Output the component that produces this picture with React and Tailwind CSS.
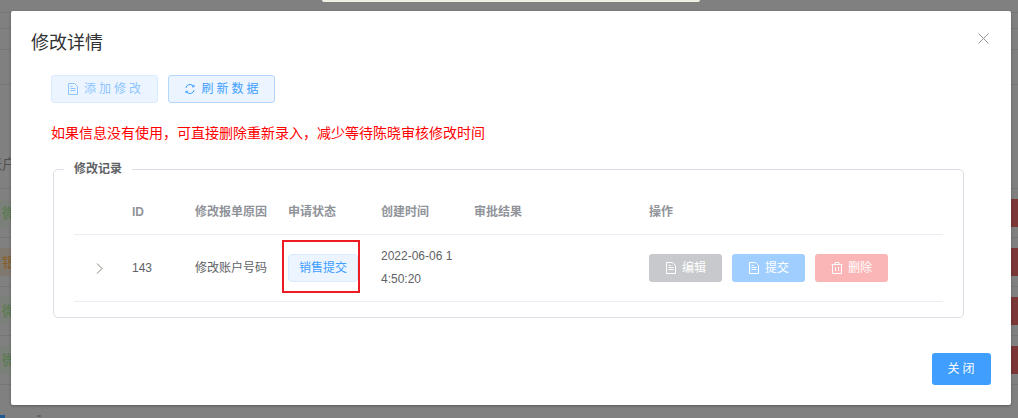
const FONT = "font-['Liberation_Sans','Noto_Sans_CJK_SC',sans-serif]";

function DocIcon({ className }) {
  return (
    <svg viewBox="0 0 12 12" width="12" height="12" fill="none" stroke="currentColor" strokeWidth="1" className={className}>
      <path d="M1.500 0.500h6l3 3v8h-9z" />
      <path d="M3.500 5.500h5M3.500 7.500h5M3.500 3.500h2" />
    </svg>
  );
}

function TrashIcon({ className }) {
  return (
    <svg viewBox="0 0 12 12" width="12" height="12" fill="none" stroke="currentColor" strokeWidth="1" className={className}>
      <path d="M0.500 2.500h11M4 2.500v-2h4v2M1.500 2.500v9h9v-9" />
      <path d="M4.500 5v4M7.500 5v4" />
    </svg>
  );
}

function RefreshIcon({ className }) {
  return (
    <svg viewBox="0 0 12 12" width="12" height="12" fill="none" stroke="currentColor" strokeWidth="1" className={className}>
      <path d="M1.800 5a4.300 4.300 0 0 1 7.200-2.300l1 1M10.200 7a4.300 4.300 0 0 1-7.200 2.300l-1-1" />
      <path d="M10 1.800v2h-2M2 10.200v-2h2" />
    </svg>
  );
}

function Cap() {
  return <div className="h-[10px]" />;
}

function BgRow({ tint, textColor, label, red }) {
  return (
    <div className="flex flex-col">
      <Cap />
      <div className={`flex h-[28px] items-center justify-between ${tint}`}>
        <span className={`ml-[2px] text-[14px] leading-[28px] ${textColor}`}>{label}</span>
        {red && <div className="h-[28px] w-[40px] bg-[#7b3636]" />}
      </div>
      <div className="h-[11px] border-b border-[#767676]" />
    </div>
  );
}

function ActionButton({ color, icon, label }) {
  return (
    <button className={`flex h-[28px] w-[73px] items-center justify-center gap-[5px] rounded-[3px] text-[12px] text-white ${color}`}>
      {icon}
      <span>{label}</span>
    </button>
  );
}

export default function App() {
  return (
    <div className={`relative h-[418px] w-[1018px] overflow-hidden bg-[#808080] ${FONT}`}>
      {/* page behind the overlay */}
      <div className="flex flex-col">
        <div className="ml-[322px] h-[2px] w-[378px] rounded-b-[2px] bg-[#eef0e2]" />
        <div className="h-[11px] border-b border-[#767676]" />
        <div className="h-[16px] border-b border-[#767676]" />
        <div className="h-[21px] border-b border-[#767676]" />
        <div className="h-[35px] border-b border-[#767676]" />
        <div className="flex h-[104px] items-end border-b border-[#767676] pb-[14px]">
          <span className="-ml-[12px] text-[14px] leading-[20px] text-[#505050]">账户</span>
        </div>
        <BgRow tint="bg-[#7b807a]" textColor="text-[#557a48]" label="微" red />
        <BgRow tint="bg-[#80796f]" textColor="text-[#8a5f28]" label="银" red />
        <BgRow tint="bg-[#7b807a]" textColor="text-[#557a48]" label="微" red />
        <BgRow tint="bg-[#7b807a]" textColor="text-[#557a48]" label="微" red />
        <div className="mt-[30px] flex h-[3px] items-start gap-[32px]">
          <div className="h-[3px] w-[5px] bg-[#205a90]" />
          <div className="h-[2px] w-[4px] bg-[#666666]" />
        </div>
      </div>

      {/* dialog */}
      <div className="absolute left-[11px] top-[11px] flex h-[394px] w-[1000px] flex-col rounded-[2px] bg-white shadow-[0_1px_3px_rgba(0,0,0,0.3)]">
        <div className="px-[20px] pb-[10px] pt-[20px]">
          <span className="block text-[18px] leading-[24px] text-[#303133]">修改详情</span>
        </div>
        <button className="absolute right-[22px] top-[22px] text-[#909399]">
          <svg viewBox="0 0 11 11" width="11" height="11" fill="none" stroke="currentColor" strokeWidth="1" className="block">
            <path d="M0.500 0.500l10 10M10.500 0.500l-10 10" />
          </svg>
        </button>

        <div className="flex-1 pl-[40px] pr-[47px] pt-[10px]">
          <div className="flex gap-[10px]">
            <button className="flex h-[28px] w-[107px] items-center justify-center gap-[5px] rounded-[3px] border border-[#d9ecff] bg-[#ecf5ff] pl-[2px] text-[12px] tracking-[3px] text-[#8cc5ff]">
              <DocIcon />
              <span>添加修改</span>
            </button>
            <button className="flex h-[28px] w-[107px] items-center justify-center gap-[5px] rounded-[3px] border border-[#b3d8ff] bg-[#ecf5ff] pl-[3px] text-[12px] tracking-[3px] text-[#409eff]">
              <RefreshIcon />
              <span>刷新数据</span>
            </button>
          </div>

          <p className="mt-[20px] text-[14px] leading-[20px] text-[#ff0000]">
            如果信息没有使用，可直接删除重新录入，减少等待陈晓审核修改时间
          </p>

          <fieldset className="ml-[2px] mt-[19px] h-[156px] rounded-[5px] border border-[#dcdfe6] pl-[10px] pr-[20px]">
            <legend className="px-[10px] text-[12px] font-bold leading-[14px] text-[#606266]">修改记录</legend>

            <div className="relative ml-[10px] mt-[13px] text-[12px]">
              <div className="grid h-[46px] grid-cols-[48px_63px_93px_93px_93px_175px_1fr] items-center border-b border-[#ebeef5] font-bold text-[#909399]">
                <div />
                <div className="pl-[10px]">ID</div>
                <div className="pl-[10px]">修改报单原因</div>
                <div className="pl-[10px]">申请状态</div>
                <div className="pl-[10px]">创建时间</div>
                <div className="pl-[10px]">审批结果</div>
                <div className="pl-[10px]">操作</div>
              </div>
              <div className="relative grid h-[67px] grid-cols-[48px_63px_93px_93px_93px_175px_1fr] items-center border-b border-[#ebeef5] text-[#606266]">
                <div className="flex justify-center pl-[3px] text-[#85807a]">
                  <svg viewBox="0 0 7 11" width="7" height="11" fill="none" stroke="currentColor" strokeWidth="1" className="block">
                    <path d="M1 0.500l5 5-5 5" />
                  </svg>
                </div>
                <div className="pl-[10px]">143</div>
                <div className="pl-[10px] leading-[23px]">修改账户号码</div>
                <div className="pl-[10px]">
                  <span className="flex h-[28px] w-[70px] items-center justify-center rounded-[4px] border border-[#d9ecff] bg-[#ecf5ff] text-[#409eff]">
                    销售提交
                  </span>
                </div>
                <div className="break-all pl-[10px] pr-[10px] leading-[23px]">2022-06-06 14:50:20</div>
                <div />
                <div className="flex gap-[10px] pl-[10px]">
                  <ActionButton color="bg-[#c8c9cc]" icon={<DocIcon />} label="编辑" />
                  <ActionButton color="bg-[#a0cfff]" icon={<DocIcon />} label="提交" />
                  <ActionButton color="bg-[#fab6b6]" icon={<TrashIcon />} label="删除" />
                </div>
                <div className="pointer-events-none absolute left-[208px] top-[5px] h-[53px] w-[78px] border-2 border-[#ed1c24]" />
              </div>
            </div>
          </fieldset>
        </div>

        <div className="flex justify-end pb-[20px] pr-[20px]">
          <button className="h-[32px] w-[59px] rounded-[3px] bg-[#409eff] pl-[2px] text-[12px] tracking-[3px] text-white">关闭</button>
        </div>
      </div>
    </div>
  );
}
